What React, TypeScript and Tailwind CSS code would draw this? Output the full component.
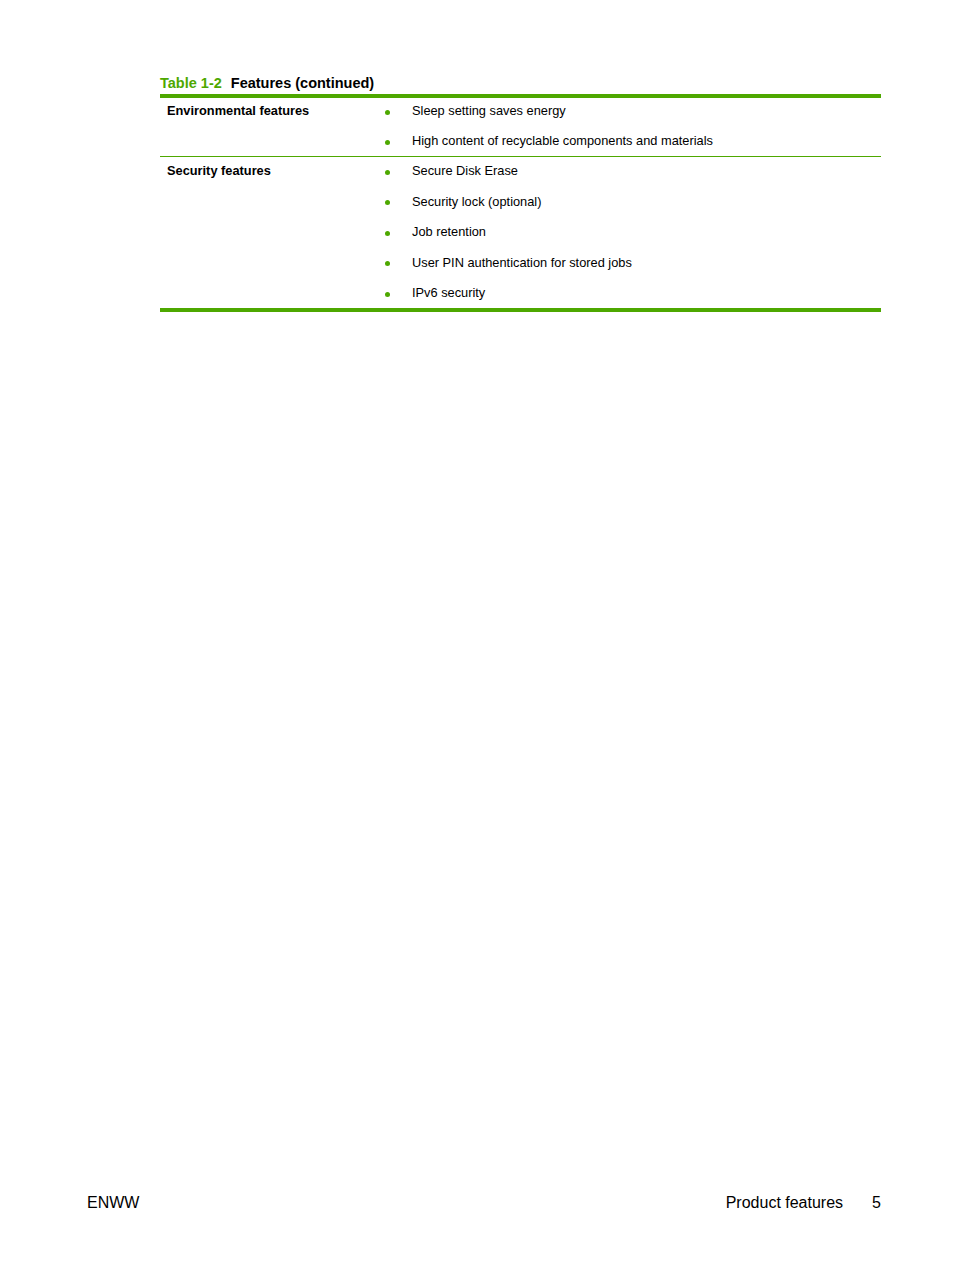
import React from "react";

type Row = { label: string; items: string[] };

const rows: Row[] = [
  {
    label: "Environmental features",
    items: ["Sleep setting saves energy", "High content of recyclable components and materials"],
  },
  {
    label: "Security features",
    items: [
      "Secure Disk Erase",
      "Security lock (optional)",
      "Job retention",
      "User PIN authentication for stored jobs",
      "IPv6 security",
    ],
  },
];

export default function App(): React.ReactNode {
  return (
    <div className="flex h-[1270px] w-[954px] flex-col bg-white font-['Liberation_Sans',Arial,sans-serif] text-black">
      {/* Table */}
      <div className="ml-[160px] mt-[74px] w-[721px]">
        <div className="text-[14.5px] font-bold leading-[18px]">
          <span className="text-[#4ea800]">Table 1-2</span>
          <span className="ml-[9px]">Features (continued)</span>
        </div>
        <div className="mt-[2px] h-[4px] bg-[#4ea800]" />
        {rows.map((row, i) => (
          <div
            key={row.label}
            className={`flex ${i === 0 ? "pt-[5px] pb-[7px] border-b border-[#4ea800]" : "pt-[6px] pb-[7px]"}`}
          >
            <div className="w-[220px] pl-[7px] text-[12.8px] font-bold leading-[16px]">{row.label}</div>
            <ul className={`flex flex-col ${i === 0 ? "gap-[14px]" : "gap-[14.5px]"}`}>
              {row.items.map((item) => (
                <li key={item} className="flex items-center text-[12.8px] leading-[16px]">
                  <span className="ml-[5px] mt-[2px] h-[5px] w-[5px] rounded-full bg-[#4ea800]" />
                  <span className="ml-[22px]">{item}</span>
                </li>
              ))}
            </ul>
          </div>
        ))}
        <div className="h-[4px] bg-[#4ea800]" />
      </div>

      {/* Footer */}
      <div className="mt-auto mb-[57px] ml-[87px] mr-[73px] flex items-center justify-between text-[16px] leading-[20px]">
        <span>ENWW</span>
        <span>
          Product features<span className="ml-[29px]">5</span>
        </span>
      </div>
    </div>
  );
}
